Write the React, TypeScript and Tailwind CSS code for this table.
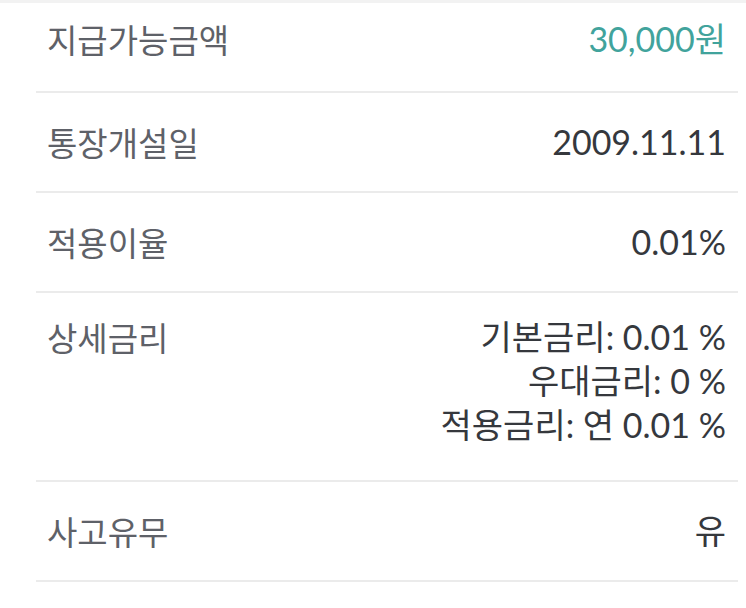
const rows = [
  { label: "통장개설일", value: "2009.11.11" },
  { label: "적용이율", value: "0.01%" },
];

const labelCls =
  "text-[33px] leading-[40px] text-[#5e6168] [font-family:'Noto_Sans_CJK_KR','Noto_Sans',sans-serif]";
const valueCls =
  "text-[34px] leading-[40px] text-[#35383d] [font-family:Lato,'Noto_Sans_CJK_KR',sans-serif]";

export default function App() {
  return (
    <main className="w-[746px] h-[608px] bg-white overflow-hidden">
      <div className="h-[3px] bg-[#f2f2f2]" />
      <div className="ml-[36px] w-[702px]">
        {/* 지급가능금액 */}
        <div className="flex justify-between items-center pl-[11px] pr-[12px] pt-[16px] pb-[32px] border-b-2 border-[#ebebeb]">
          <span className={labelCls}>지급가능금액</span>
          <span className={valueCls + " !text-[#41a39c]"}>30,000원</span>
        </div>

        {rows.map((r) => (
          <div
            key={r.label}
            className="flex justify-between items-center pl-[11px] pr-[12px] py-[29px] border-b-2 border-[#ebebeb]"
          >
            <span className={labelCls}>{r.label}</span>
            <span className={valueCls}>{r.value}</span>
          </div>
        ))}

        {/* 상세금리 */}
        <div className="flex justify-between items-start pl-[11px] pr-[12px] pt-[22px] pb-[33px] border-b-2 border-[#ebebeb]">
          <span className={labelCls + " !leading-[44px]"}>상세금리</span>
          <div className={valueCls + " !leading-[44px] text-right"}>
            <div>기본금리: 0.01 %</div>
            <div>우대금리: 0 %</div>
            <div>적용금리: 연 0.01 %</div>
          </div>
        </div>

        {/* 사고유무 */}
        <div className="flex justify-between items-center pl-[11px] pr-[12px] py-[29px] border-b-2 border-[#ebebeb]">
          <span className={labelCls}>사고유무</span>
          <span className={valueCls}>유</span>
        </div>
      </div>
    </main>
  );
}
